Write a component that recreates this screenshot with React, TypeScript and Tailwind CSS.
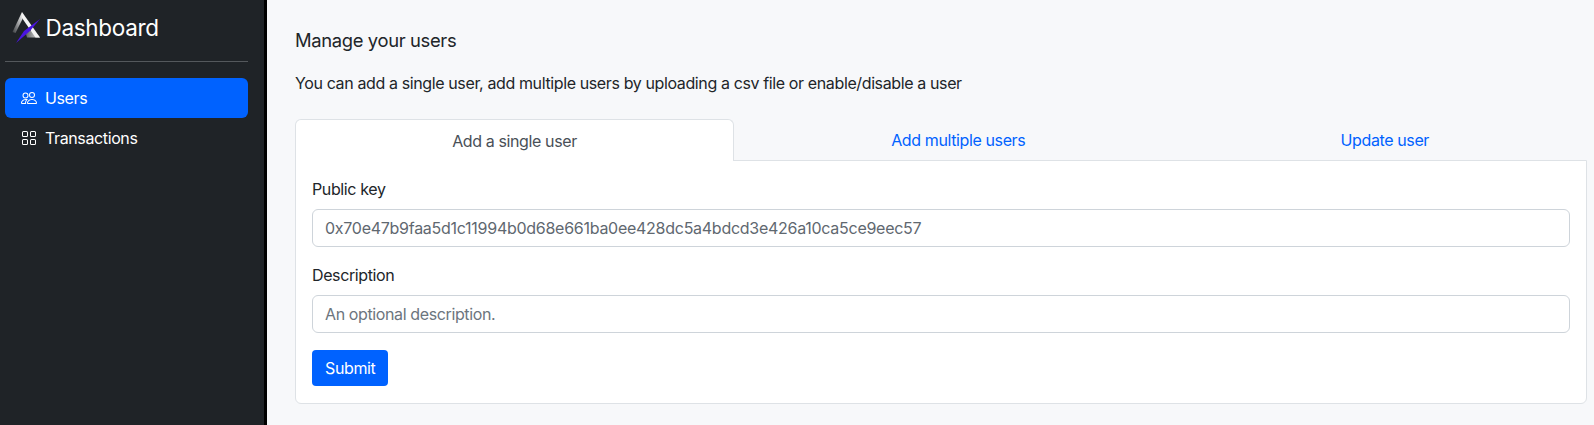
import { BsGrid, BsPeople } from 'react-icons/bs'

function Logo() {
  return (
    <svg width="34" height="36" viewBox="0 0 34 36" className="shrink-0">
      <defs>
        <linearGradient id="leftLeg" x1="1" y1="0" x2="0" y2="1">
          <stop offset="0" stopColor="#ffffff" />
          <stop offset="1" stopColor="#3a3d40" />
        </linearGradient>
        <linearGradient id="baseFade" x1="0" y1="0" x2="1" y2="0">
          <stop offset="0" stopColor="#55585b" />
          <stop offset="1" stopColor="#e6e6e6" />
        </linearGradient>
      </defs>
      <path d="M12 2 L2.5 22 L5.5 23 L12.5 9 Z" fill="url(#leftLeg)" />
      <path d="M15 21 L24 21 L30 27.5 L17 27.5 Z" fill="url(#baseFade)" />
      <path d="M12 2 L30 27.5 L25.5 27.5 L12 8 Z" fill="#f4f4f4" />
      <path d="M30 9 L14 21 L6 33 L20 21 Z" fill="#4a14e0" />
    </svg>
  )
}

export default function App() {
  return (
    <div className="flex h-[425px] w-[1594px] overflow-hidden bg-[#f7f8fa] font-['Inter',sans-serif] text-base tracking-[-0.38px] text-[#212529]">
      {/* Sidebar */}
      <aside className="flex w-[267px] shrink-0 flex-col border-r-[3px] border-black bg-[#1f2327] pl-[5px] pr-[16px] text-white">
        <div className="flex h-[62px] items-start border-b border-[#54585c] pl-[5px] pt-[10px]">
          <Logo />
          <span className="ml-[1.5px] mt-[4px] text-[22.5px] leading-[28px] tracking-[-0.3px]">Dashboard</span>
        </div>
        <nav className="mt-4 flex flex-col">
          <a className="flex h-10 items-center rounded-md bg-[#0062ff] pl-4">
            <BsPeople className="h-4 w-4" />
            <span className="ml-2">Users</span>
          </a>
          <a className="flex h-10 items-center rounded-md pl-4">
            <BsGrid className="h-4 w-4" />
            <span className="ml-2">Transactions</span>
          </a>
        </nav>
      </aside>

      {/* Main content */}
      <main className="min-w-0 flex-1 pl-[28px] pr-[7px]">
        <h1 className="mt-[28px] text-[18.4px] font-normal leading-[24px] tracking-[-0.35px]">Manage your users</h1>
        <p className="mt-[19px] leading-[24px]">
          You can add a single user, add multiple users by uploading a csv file or enable/disable a user
        </p>

        <div className="mt-[24px] flex h-[41px]">
          <div className="z-10 flex h-[42px] w-[439px] items-center justify-center rounded-t-md border border-b-0 border-[#dee2e6] bg-white text-[#495057]">
            Add a single user
          </div>
          <div className="flex flex-1 items-center justify-center pl-[22px] text-[#0062ff]">Add multiple users</div>
          <div className="flex flex-1 items-center justify-center pl-[22px] text-[#0062ff]">Update user</div>
        </div>

        <div className="rounded-b-md border border-[#dee2e6] bg-white px-4 pb-[17px] pt-4">
          <label className="block leading-[24px]">Public key</label>
          <input
            readOnly
            value="0x70e47b9faa5d1c11994b0d68e661ba0ee428dc5a4bdcd3e426a10ca5ce9eec57"
            className="mt-2 block h-[38px] w-full rounded-md border border-[#ced4da] bg-white px-3 tracking-[-0.27px] text-[#5f6870] outline-none"
          />
          <label className="mt-4 block leading-[24px]">Description</label>
          <input
            readOnly
            placeholder="An optional description."
            className="mt-2 block h-[38px] w-full rounded-md border border-[#ced4da] bg-white px-3 outline-none placeholder:text-[#6c757d]"
          />
          <button className="mt-[17px] block h-[36px] rounded bg-[#0062ff] px-[13px] text-white">Submit</button>
        </div>
      </main>
    </div>
  )
}
